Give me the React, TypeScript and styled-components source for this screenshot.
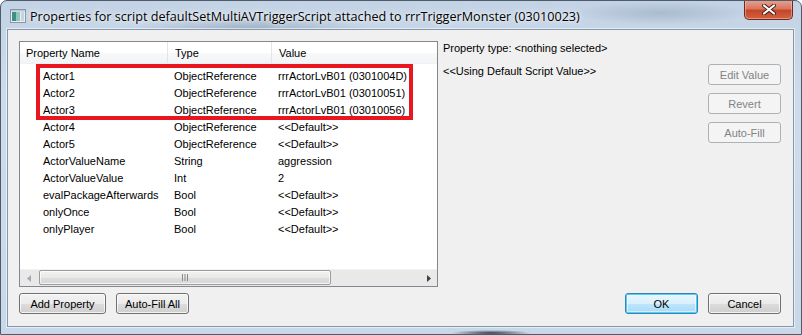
import React from 'react'
import styled, {createGlobalStyle, css} from 'styled-components'

/****************************************************** data ***************************************************/
const properties = [
	{name: 'Actor1', type: 'ObjectReference', value: 'rrrActorLvB01 (0301004D)'},
	{name: 'Actor2', type: 'ObjectReference', value: 'rrrActorLvB01 (03010051)'},
	{name: 'Actor3', type: 'ObjectReference', value: 'rrrActorLvB01 (03010056)'},
	{name: 'Actor4', type: 'ObjectReference', value: '<<Default>>'},
	{name: 'Actor5', type: 'ObjectReference', value: '<<Default>>'},
	{name: 'ActorValueName', type: 'String', value: 'aggression'},
	{name: 'ActorValueValue', type: 'Int', value: '2'},
	{name: 'evalPackageAfterwards', type: 'Bool', value: '<<Default>>'},
	{name: 'onlyOnce', type: 'Bool', value: '<<Default>>'},
	{name: 'onlyPlayer', type: 'Bool', value: '<<Default>>'},
]

const GlobalStyle = createGlobalStyle`
	html, body {
		margin: 0;
		padding: 0;
		overflow: hidden;
		background: #fff;
	}
	* { box-sizing: border-box; }
`

function App() {
	return (
		<>
			<GlobalStyle />
			<Window>
				<TitleBar>
					<AppIcon width={16} height={14} viewBox={'0 0 16 14'}>
						<rect x={0.5} y={0.5} width={15} height={13} fill={'#e8eef4'} stroke={'#8a96a4'} />
						<rect x={2} y={3} width={4} height={9} fill={'#3f8f86'} />
						<rect x={6} y={3} width={4} height={9} fill={'#8fc7bd'} />
						<rect x={11} y={3} width={3} height={9} fill={'#c9d3dc'} />
						<rect x={1} y={1} width={14} height={1.5} fill={'#b9c6d3'} />
					</AppIcon>
					<TitleText>Properties for script defaultSetMultiAVTriggerScript attached to rrrTriggerMonster (03010023)</TitleText>
					<CloseButton>
						<svg width={14} height={11} viewBox={'0 0 14 11'}>
							<path d={'M2 1.5 L12 9.5 M12 1.5 L2 9.5'} stroke={'#4a1d16'} strokeWidth={4} strokeLinecap={'round'} />
							<path d={'M2 1.5 L12 9.5 M12 1.5 L2 9.5'} stroke={'#ffffff'} strokeWidth={2.2} strokeLinecap={'round'} />
						</svg>
					</CloseButton>
				</TitleBar>
				<Client>
					<MainRow>
						<ListView>
							<ListHeader>
								<HeaderCell $first>Property Name</HeaderCell>
								<HeaderCell>Type</HeaderCell>
								<HeaderCell $last>Value</HeaderCell>
							</ListHeader>
							<ListBody>
								{properties.map((p) => (
									<Row key={p.name}>
										<NameCell>{p.name}</NameCell>
										<Cell>{p.type}</Cell>
										<Cell>{p.value}</Cell>
									</Row>
								))}
								<Highlight />
							</ListBody>
							<HScroll>
								<ScrollArrow>
									<svg width={4} height={7} viewBox={'0 0 4 7'}><path d={'M4 0 L0 3.5 L4 7 Z'} fill={'#a8a8a8'} /></svg>
								</ScrollArrow>
								<ScrollTrack>
									<ScrollThumb>
										<svg width={8} height={7} viewBox={'0 0 8 7'}>
											<path d={'M1.5 0 V7 M4 0 V7 M6.5 0 V7'} stroke={'#8a8a8a'} strokeWidth={1} />
										</svg>
									</ScrollThumb>
								</ScrollTrack>
								<ScrollArrow>
									<svg width={4} height={7} viewBox={'0 0 4 7'}><path d={'M0 0 L4 3.5 L0 7 Z'} fill={'#404040'} /></svg>
								</ScrollArrow>
							</HScroll>
						</ListView>
						<SidePanel>
							<InfoText>Property type: &lt;nothing selected&gt;</InfoText>
							<SideRow>
								<InfoText>&lt;&lt;Using Default Script Value&gt;&gt;</InfoText>
								<ButtonColumn>
									<Button disabled>Edit Value</Button>
									<Button disabled>Revert</Button>
									<Button disabled>Auto-Fill</Button>
								</ButtonColumn>
							</SideRow>
						</SidePanel>
					</MainRow>
					<BottomRow>
						<ButtonGroup>
							<Button $width={87}>Add Property</Button>
							<Button>Auto-Fill All</Button>
						</ButtonGroup>
						<ButtonGroup>
							<Button $primary>OK</Button>
							<Button>Cancel</Button>
						</ButtonGroup>
					</BottomRow>
				</Client>
			</Window>
		</>
	)
}

/****************************************************** window frame ***************************************************/
const Window = styled.div`
	width: 802px;
	height: 335px;
	display: flex;
	flex-direction: column;
	padding: 0 7px 7px 6px;
	border: 1px solid #4d5b6b;
	border-radius: 7px 7px 0 0;
	background:
		radial-gradient(ellipse 120px 14px at 250px 28px, rgba(90, 110, 135, 0.35), transparent),
		radial-gradient(ellipse 90px 12px at 660px 12px, rgba(110, 130, 150, 0.3), transparent),
		radial-gradient(ellipse 40px 3px at 490px 332px, rgba(20, 25, 35, 0.8), transparent),
		linear-gradient(180deg, #c3d3e5 0%, #cedbea 30%, #c9d8e8 100%);
	font-family: 'Liberation Sans', Arial, sans-serif;
	font-size: 11px;
	color: #000;
	overflow: hidden;
`

const TitleBar = styled.div`
	height: 28px;
	display: flex;
	align-items: flex-start;
	padding-left: 3px;
`

const AppIcon = styled.svg`
	margin-top: 8px;
	flex-shrink: 0;
`

const TitleText = styled.div`
	margin: 6px 0 0 4px;
	font-family: 'Open Sans', 'Noto Sans', sans-serif;
	font-size: 12.65px;
	line-height: 18px;
	color: #000;
	white-space: nowrap;
	text-shadow: 0 0 8px rgba(255, 255, 255, 0.9), 0 0 3px rgba(255, 255, 255, 0.9);
`

const CloseButton = styled.div`
	margin-left: auto;
	margin-right: 1px;
	margin-top: -1px;
	width: 49px;
	height: 20px;
	display: flex;
	align-items: center;
	justify-content: center;
	border: 1px solid #6e2a20;
	border-top: none;
	border-radius: 0 0 5px 5px;
	background: linear-gradient(180deg, #e8a391 0%, #d9775f 45%, #c5452b 55%, #d0643e 100%);
	box-shadow: inset 0 0 0 1px rgba(255, 210, 200, 0.45);
`

const Client = styled.div`
	flex: 1;
	display: flex;
	flex-direction: column;
	padding: 11px 12px 0 11px;
	background: #f0f0f0;
	border: 1px solid #8397ad;
	box-shadow: 0 0 0 1px rgba(255, 255, 255, 0.55);
`

/****************************************************** list view ***************************************************/
const MainRow = styled.div`
	display: flex;
	height: 246px;
`

const ListView = styled.div`
	width: 419px;
	display: flex;
	flex-direction: column;
	background: #fff;
	border: 1px solid #828790;
`

const grid = css`
	display: grid;
	grid-template-columns: 148px 104px 1fr;
`

const ListHeader = styled.div`
	${grid};
	height: 22px;
	background: linear-gradient(180deg, #ffffff 0%, #ffffff 50%, #f7f8fa 51%, #f3f4f6 100%);
	border-bottom: 1px solid #eef0f3;
`

const HeaderCell = styled.div<{$first?: boolean; $last?: boolean}>`
	display: flex;
	align-items: center;
	padding-left: ${(p) => (p.$first ? 6 : 7)}px;
	border-right: ${(p) => (p.$last ? 'none' : '1px solid #e3e5e8')};
	line-height: 14px;
`

const ListBody = styled.div`
	position: relative;
	flex: 1;
	padding-top: 3px;
`

const Row = styled.div`
	${grid};
	height: 17px;
	align-items: center;
	line-height: 14px;
	white-space: nowrap;
`

const Cell = styled.div`
	padding-left: 6px;
`

const NameCell = styled.div`
	padding-left: 23px;
`

const Highlight = styled.div`
	position: absolute;
	left: 16px;
	top: 0px;
	width: 377px;
	height: 56px;
	border: 4px solid #e8161f;
	pointer-events: none;
`

const HScroll = styled.div`
	height: 17px;
	display: flex;
	background: #e9e9e9;
	border-top: 1px solid #f2f2f2;
`

const ScrollArrow = styled.div`
	width: 17px;
	display: flex;
	align-items: center;
	justify-content: center;
`

const ScrollTrack = styled.div`
	flex: 1;
	padding: 0 0 1px 2px;
	display: flex;
`

const ScrollThumb = styled.div`
	width: 292px;
	display: flex;
	align-items: center;
	justify-content: center;
	border: 1px solid #9c9c9c;
	border-radius: 2px;
	background: linear-gradient(180deg, #f3f3f3 0%, #e9e9e9 50%, #dcdcdc 51%, #d8d8d8 100%);
	box-shadow: inset 0 0 0 1px rgba(255, 255, 255, 0.7);
`

/****************************************************** side panel ***************************************************/
const SidePanel = styled.div`
	flex: 1;
	display: flex;
	flex-direction: column;
	padding-left: 5px;
	gap: 9px;
`

const InfoText = styled.div`
	line-height: 14px;
	white-space: nowrap;
`

const SideRow = styled.div`
	display: flex;
	justify-content: space-between;
`

const ButtonColumn = styled.div`
	display: flex;
	flex-direction: column;
	gap: 8px;
`

/****************************************************** buttons ***************************************************/
const BottomRow = styled.div`
	margin-top: 6px;
	display: flex;
	justify-content: space-between;
`

const ButtonGroup = styled.div`
	display: flex;
	gap: 10px;
`

const Button = styled.button<{$primary?: boolean; $width?: number}>`
	width: ${(p) => p.$width || 73}px;
	height: 21px;
	padding: 0;
	font-family: 'Liberation Sans', Arial, sans-serif;
	font-size: 11px;
	color: #000;
	border: 1px solid #707070;
	border-radius: 3px;
	background: linear-gradient(180deg, #f2f2f2 0%, #ebebeb 50%, #dddddd 51%, #cfcfcf 100%);
	box-shadow: inset 0 0 0 1px rgba(255, 255, 255, 0.75);

	${(p) =>
		p.$primary &&
		css`
			border-color: #3c7fb1;
			box-shadow: inset 0 0 0 1px #48d1fa, inset 0 0 0 2px rgba(255, 255, 255, 0.5);
			background: linear-gradient(180deg, #eaf6fd 0%, #d9f0fc 50%, #bee6fd 51%, #a7d9f5 100%);
		`}

	&:disabled {
		color: #838383;
		border-color: #adb2b5;
		background: #f4f4f4;
		box-shadow: none;
	}
`

export default App
